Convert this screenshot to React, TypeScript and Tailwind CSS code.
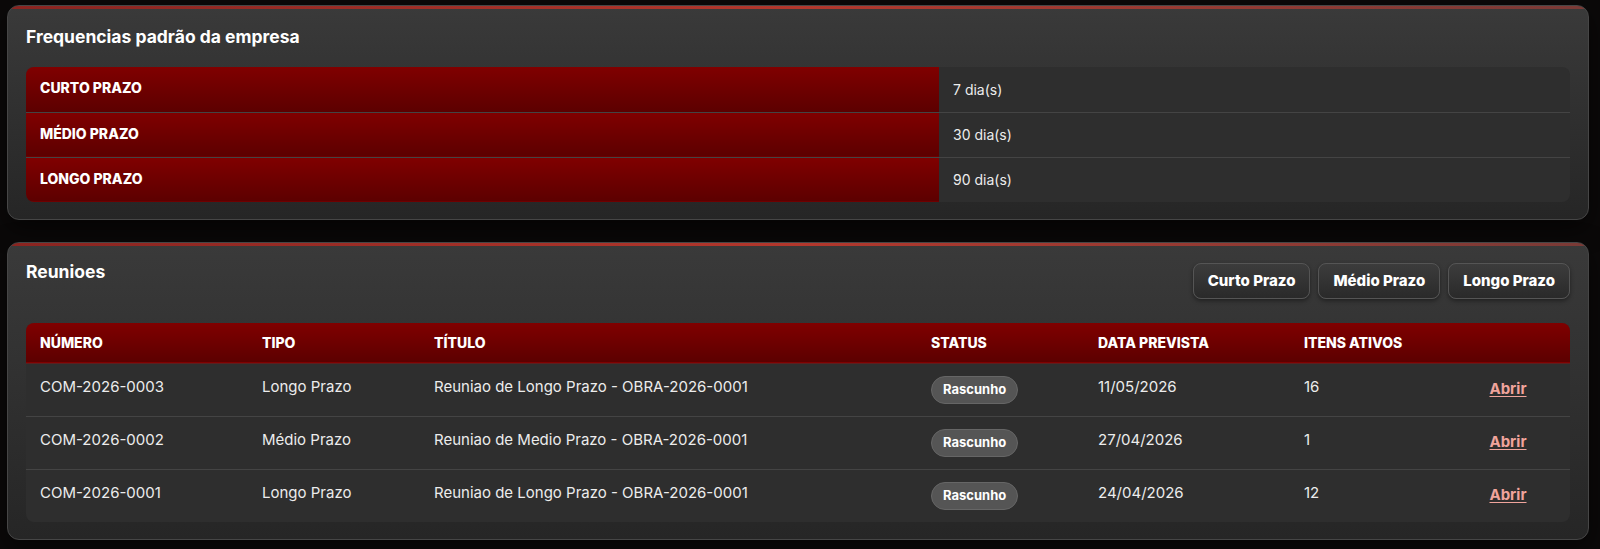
import React from "react";

const frequencias = [
  { label: "Curto Prazo", dias: 7 },
  { label: "Médio Prazo", dias: 30 },
  { label: "Longo Prazo", dias: 90 },
];

const reunioes = [
  {
    numero: "COM-2026-0003",
    tipo: "Longo Prazo",
    titulo: "Reuniao de Longo Prazo - OBRA-2026-0001",
    status: "Rascunho",
    data: "11/05/2026",
    itens: 16,
  },
  {
    numero: "COM-2026-0002",
    tipo: "Médio Prazo",
    titulo: "Reuniao de Medio Prazo - OBRA-2026-0001",
    status: "Rascunho",
    data: "27/04/2026",
    itens: 1,
  },
  {
    numero: "COM-2026-0001",
    tipo: "Longo Prazo",
    titulo: "Reuniao de Longo Prazo - OBRA-2026-0001",
    status: "Rascunho",
    data: "24/04/2026",
    itens: 12,
  },
];

function Card({ children }: { children: React.ReactNode }) {
  return (
    <section className="relative rounded-xl border border-[#464646] bg-gradient-to-b from-[#3a3a3a] to-[#262626] px-[18px] pb-[17px] shadow-[0_8px_24px_rgba(0,0,0,0.5)] overflow-hidden">
      {/* red accent on top edge */}
      <div className="absolute left-0 right-0 top-0 h-[3px] bg-gradient-to-r from-[#8a2420] via-[#b3372c] to-[#7a3a36]" />
      <div className="pt-[3px]">{children}</div>
    </section>
  );
}

function PrazoButton({ label }: { label: string }) {
  return (
    <button className="h-[36px] px-[14px] rounded-lg border border-[#555] bg-gradient-to-b from-[#3c3c3c] to-[#2a2a2a] text-[15px] font-extrabold text-white shadow-[0_2px_4px_rgba(0,0,0,0.4)]">
      {label}
    </button>
  );
}

export default function App() {
  return (
    <div
      className="min-h-screen bg-[#0b0909] pl-[7px] pr-[11px] pt-[5px] flex flex-col gap-[22px] text-white"
      style={{ fontFamily: "Inter, 'Noto Sans', sans-serif" }}
    >
      {/* Frequencias */}
      <Card>
        <h2 className="pt-[16px] text-[17.5px] leading-[24px] font-bold text-white">
          Frequencias padrão da empresa
        </h2>
        <div className="mt-[18px] rounded-lg overflow-hidden bg-[#2e2e2e]">
          <table className="w-full border-collapse">
            <tbody>
              {frequencias.map((f, i) => (
                <tr key={f.label} className={i < 2 ? "border-b border-[#444]" : ""}>
                  <th className="w-[913px] h-[45px] px-[14px] text-left align-middle bg-gradient-to-b from-[#800000] to-[#5c0000] text-[14px] font-extrabold uppercase text-white pb-[3px]">
                    {f.label}
                  </th>
                  <td className="px-[14px] text-[14px] text-[#ececec]">{f.dias} dia(s)</td>
                </tr>
              ))}
            </tbody>
          </table>
        </div>
      </Card>

      {/* Reunioes */}
      <Card>
        <div className="pt-[14px] flex items-start justify-between">
          <h2 className="text-[17.5px] leading-[24px] font-bold text-white">Reunioes</h2>
          <div className="mt-[3px] flex gap-[8px]">
            <PrazoButton label="Curto Prazo" />
            <PrazoButton label="Médio Prazo" />
            <PrazoButton label="Longo Prazo" />
          </div>
        </div>
        <div className="mt-[24px] rounded-lg overflow-hidden bg-[#2e2e2e]">
          <table className="w-full table-fixed border-collapse">
            <colgroup>
              <col className="w-[222px]" />
              <col className="w-[172px]" />
              <col className="w-[497px]" />
              <col className="w-[167px]" />
              <col className="w-[206px]" />
              <col className="w-[156px]" />
              <col />
            </colgroup>
            <thead>
              <tr className="bg-gradient-to-b from-[#800000] to-[#5c0000] border-b border-[#5a2020]">
                {["Número", "Tipo", "Título", "Status", "Data Prevista", "Itens Ativos", ""].map((h) => (
                  <th
                    key={h}
                    className="h-[40px] px-[14px] text-left text-[14px] font-extrabold uppercase text-white"
                  >
                    {h}
                  </th>
                ))}
              </tr>
            </thead>
            <tbody>
              {reunioes.map((r, i) => (
                <tr key={r.numero} className={i < 2 ? "border-b border-[#444]" : ""}>
                  <td className="px-[14px] py-3 align-top text-[15px] leading-[22px] text-[#ececec]">{r.numero}</td>
                  <td className="px-[14px] py-3 align-top text-[15px] leading-[22px] text-[#ececec]">{r.tipo}</td>
                  <td className="px-[14px] py-3 align-top text-[15px] leading-[22px] text-[#ececec]">{r.titulo}</td>
                  <td className="px-[14px] py-3 align-top">
                    <span className="inline-flex h-[28px] items-center rounded-full border border-[#666] bg-[#555] px-[11px] text-[13px] font-bold text-white">
                      {r.status}
                    </span>
                  </td>
                  <td className="px-[14px] py-3 align-top text-[15px] leading-[22px] text-[#ececec]">{r.data}</td>
                  <td className="px-[14px] py-3 align-top text-[15px] leading-[22px] text-[#ececec]">{r.itens}</td>
                  <td className="px-[14px] py-3 align-top text-center">
                    <a href="#" className="text-[15px] leading-[22px] font-bold text-[#f0a49c] underline underline-offset-2">
                      Abrir
                    </a>
                  </td>
                </tr>
              ))}
            </tbody>
          </table>
        </div>
      </Card>
    </div>
  );
}
